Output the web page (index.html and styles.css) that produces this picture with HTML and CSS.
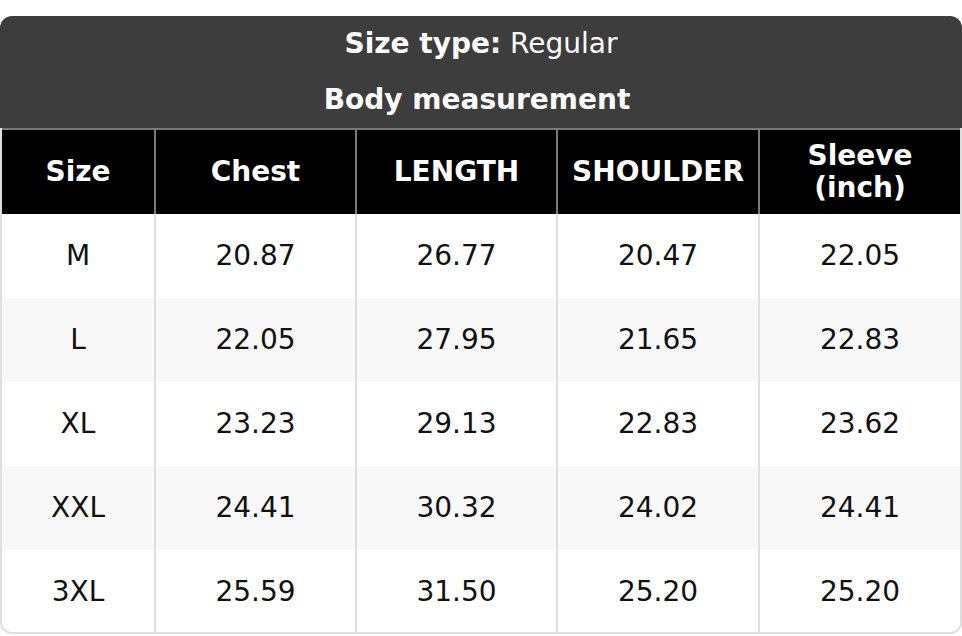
FILE: index.html
```html
<!DOCTYPE html>
<html>
<head>
<meta charset="utf-8">
<link rel="stylesheet" href="styles.css">
</head>
<body>
<div class="chart">
  <div class="caption">
    <div class="cap-line"><b>Size type:</b> Regular</div>
    <div class="cap-line cap-title"><b>Body measurement</b></div>
  </div>
  <table class="sizes">
    <colgroup>
      <col class="c1"><col class="c2"><col class="c3"><col class="c4"><col class="c5">
    </colgroup>
    <thead>
      <tr>
        <th>Size</th>
        <th>Chest</th>
        <th>LENGTH</th>
        <th>SHOULDER</th>
        <th>Sleeve<br>(inch)</th>
      </tr>
    </thead>
    <tbody>
      <tr><td>M</td><td>20.87</td><td>26.77</td><td>20.47</td><td>22.05</td></tr>
      <tr><td>L</td><td>22.05</td><td>27.95</td><td>21.65</td><td>22.83</td></tr>
      <tr><td>XL</td><td>23.23</td><td>29.13</td><td>22.83</td><td>23.62</td></tr>
      <tr><td>XXL</td><td>24.41</td><td>30.32</td><td>24.02</td><td>24.41</td></tr>
      <tr class="last"><td>3XL</td><td>25.59</td><td>31.50</td><td>25.20</td><td>25.20</td></tr>
    </tbody>
  </table>
</div>
</body>
</html>
```

FILE: styles.css
```css
html, body {
  margin: 0;
  padding: 0;
  background: #ffffff;
}

body {
  font-family: "DejaVu Sans", sans-serif;
  font-size: 28px;
  color: #111111;
}

.chart {
  padding-top: 16px;
  width: 962px;
}

.caption {
  background: #3d3d3d;
  color: #ffffff;
  border-radius: 12px 12px 0 0;
  text-align: center;
}

.cap-line {
  height: 56px;
  line-height: 56px;
  font-weight: normal;
}

.cap-title {
  padding-right: 8px;
}

.cap-line b {
  font-weight: bold;
}

.sizes {
  width: 962px;
  table-layout: fixed;
  border-collapse: separate;
  border-spacing: 0;
  border: 2px solid #dedede;
  border-top: none;
  border-radius: 0 0 12px 12px;
  box-sizing: border-box;
}

.c1 { width: 152px; }
.c2 { width: 201px; }
.c3 { width: 201px; }
.c4 { width: 202px; }
.c5 { width: auto; }

.sizes th {
  background: #000000;
  color: #ffffff;
  font-weight: bold;
  line-height: 32px;
  padding: 10px 0;
  height: 64px;
  border-top: 2px solid #7a7a7a;
  text-align: center;
  vertical-align: middle;
}

.sizes th + th {
  border-left: 2px solid #7a7a7a;
}

.sizes td {
  font-weight: normal;
  line-height: 32px;
  padding: 26px 0;
  text-align: center;
  vertical-align: middle;
  background: #ffffff;
}

.sizes td + td {
  border-left: 2px solid #dedede;
}

.sizes tbody tr:nth-child(even) td {
  background: #f8f8f8;
}

.sizes tr.last td {
  padding-bottom: 24px;
}

.sizes tr.last td:first-child {
  border-bottom-left-radius: 10px;
}

.sizes tr.last td:last-child {
  border-bottom-right-radius: 10px;
}
```
